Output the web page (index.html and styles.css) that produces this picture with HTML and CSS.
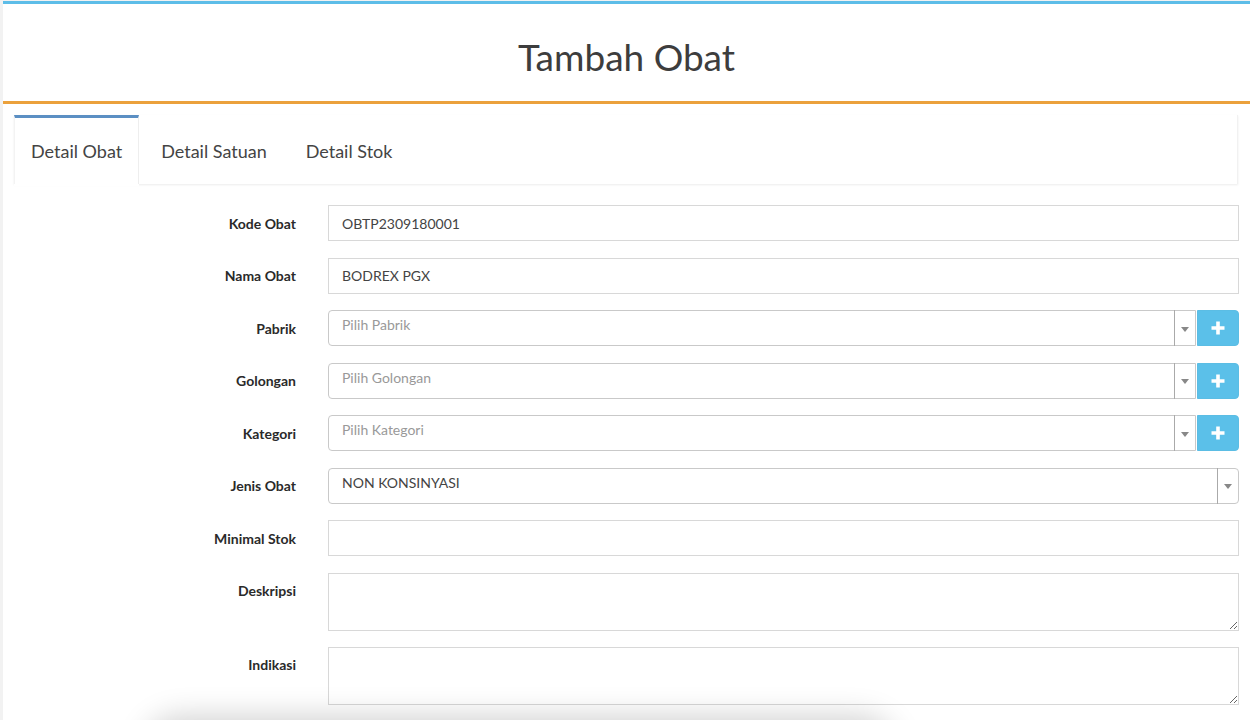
FILE: index.html
```html
<!DOCTYPE html>
<html lang="en">
<head>
    <meta charset="UTF-8">
    <meta name="viewport" content="width=device-width, initial-scale=1.0">
    <title>Tambah Obat</title>
    <link rel="stylesheet" href="styles.css">
</head>
<body>
    <div class="box">
        <div class="box-header">
            <h1 class="box-title">Tambah Obat</h1>
        </div>

        <div class="tabs">
            <ul class="tab-nav">
                <li class="tab active">Detail Obat</li>
                <li class="tab">Detail Satuan</li>
                <li class="tab">Detail Stok</li>
            </ul>

            <form class="form">
                <label class="label">Kode Obat</label>
                <input class="input" type="text" value="OBTP2309180001">

                <label class="label">Nama Obat</label>
                <input class="input" type="text" value="BODREX PGX">

                <label class="label">Pabrik</label>
                <div class="select-group">
                    <div class="select placeholder">
                        <span class="select-text">Pilih Pabrik</span>
                        <span class="select-arrow"><i class="caret"></i></span>
                    </div>
                    <button type="button" class="btn-add">
                        <svg width="14" height="14" viewBox="0 0 14 14"><path d="M7 0.5v13M0.5 7h13" stroke="#fff" stroke-width="3.6"/></svg>
                    </button>
                </div>

                <label class="label">Golongan</label>
                <div class="select-group">
                    <div class="select placeholder">
                        <span class="select-text">Pilih Golongan</span>
                        <span class="select-arrow"><i class="caret"></i></span>
                    </div>
                    <button type="button" class="btn-add">
                        <svg width="14" height="14" viewBox="0 0 14 14"><path d="M7 0.5v13M0.5 7h13" stroke="#fff" stroke-width="3.6"/></svg>
                    </button>
                </div>

                <label class="label">Kategori</label>
                <div class="select-group">
                    <div class="select placeholder">
                        <span class="select-text">Pilih Kategori</span>
                        <span class="select-arrow"><i class="caret"></i></span>
                    </div>
                    <button type="button" class="btn-add">
                        <svg width="14" height="14" viewBox="0 0 14 14"><path d="M7 0.5v13M0.5 7h13" stroke="#fff" stroke-width="3.6"/></svg>
                    </button>
                </div>

                <label class="label">Jenis Obat</label>
                <div class="select full">
                    <span class="select-text">NON KONSINYASI</span>
                    <span class="select-arrow"><i class="caret"></i></span>
                </div>

                <label class="label">Minimal Stok</label>
                <input class="input" type="text">

                <label class="label top">Deskripsi</label>
                <textarea class="textarea"></textarea>

                <label class="label top">Indikasi</label>
                <textarea class="textarea"></textarea>
            </form>
        </div>
    </div>

    <!-- floating panel below the fold, only its shadow shows -->
    <div class="floating"></div>
</body>
</html>
```

FILE: styles.css
```css
html, body {
    height: 100%;
    overflow: hidden;
}

body {
    margin: 0;
    padding-top: 1px;
    background: #f2f2f2;
    font-family: Lato, "Open Sans", sans-serif;
    color: #333;
    position: relative;
}

.box {
    margin-left: 3px;
    background: #fff;
    border-top: 3px solid #5dbde8;
    min-height: 100%;
}

.box-header {
    height: 97px;
    display: flex;
    align-items: center;
    justify-content: center;
    border-bottom: 3px solid #eba13c;
}

.box-title {
    margin: 0;
    padding-top: 8px;
    font-size: 37px;
    font-weight: 400;
    color: #3d3d3d;
}

.tabs {
    margin: 11px 12px 0 11px;
}

/* Tab strip */
.tab-nav {
    display: flex;
    margin: 0;
    padding: 0;
    list-style: none;
    height: 69px;
    box-shadow: 0 1px 2px rgba(0,0,0,0.08);
    border-right: 1px solid #f1f1f1;
}

.tab {
    display: flex;
    align-items: center;
    padding: 0 17px;
    margin-right: 5px;
    font-size: 18px;
    color: #444;
    border-top: 3px solid transparent;
}

.tab.active {
    border-top-color: #5b8fc3;
    border-left: 1px solid #f3f3f3;
    border-right: 1px solid #eee;
    padding: 0 16px;
    background: #fff;
    position: relative;
    z-index: 1;
    box-shadow: 0 2px 0 #fff;
}

/* Form grid */
.form {
    display: grid;
    grid-template-columns: 282px 1fr;
    column-gap: 32px;
    row-gap: 16.5px;
    padding-top: 21px;
    margin-right: -1px;
}

.label {
    font-size: 14px;
    font-weight: 700;
    color: #2a2a2a;
    text-align: right;
    align-self: center;
}

.label.top {
    align-self: start;
    padding-top: 9px;
}

.input,
.textarea {
    box-sizing: border-box;
    height: 36px;
    border: 1px solid #d8d8d8;
    padding: 0 13px;
    font-family: inherit;
    font-size: 14px;
    color: #444;
    outline: none;
    margin: 0;
}

.textarea {
    height: 58px;
    resize: vertical;
    padding: 6px 13px;
}

/* Select2-like boxes */
.select-group {
    display: flex;
    height: 36px;
}

.select {
    flex: 1;
    box-sizing: border-box;
    height: 36px;
    display: flex;
    border: 1px solid #c9c9c9;
    border-radius: 4px;
    background: #fff;
}

.select-group .select {
    border-radius: 4px 0 0 4px;
}

.select-text {
    flex: 1;
    padding: 5px 13px 0;
    font-size: 14px;
    color: #444;
}

.select.placeholder .select-text {
    color: #999;
}

.select-arrow {
    width: 20px;
    display: flex;
    align-items: center;
    justify-content: center;
    border-left: 1px solid #aaa;
    margin: -1px 0;
}

.caret {
    width: 0;
    height: 0;
    border-left: 4px solid transparent;
    border-right: 4px solid transparent;
    border-top: 5px solid #888;
    margin-top: 2px;
}

.btn-add {
    width: 42px;
    height: 36px;
    margin-left: 1px;
    border: 1px solid #5bbde4;
    border-radius: 0 4px 4px 0;
    background: #5bc0e9;
    display: flex;
    align-items: center;
    justify-content: center;
    padding: 0;
}

.floating {
    position: absolute;
    left: 150px;
    top: 722px;
    width: 740px;
    height: 60px;
    background: #fff;
    box-shadow: 0 0 30px 6px rgba(0,0,0,0.18);
    border-radius: 40px;
}
```
